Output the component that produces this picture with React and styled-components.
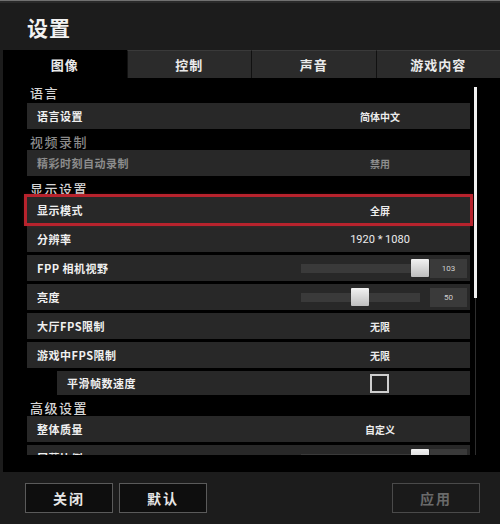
import React from "react";
import styled, { createGlobalStyle } from "styled-components";

const Global = createGlobalStyle`
  html, body {
    margin: 0;
    padding: 0;
    background: #1c1c1c;
  }
  body {
    font-family: "Noto Sans CJK SC", "Noto Sans", "Liberation Sans", sans-serif;
  }
`;

const tabs = ["图像", "控制", "声音", "游戏内容"];

const App = () => {
  return (
    <Window>
      <Global />
      <TopEdge />
      <Header>
        <Title>设置</Title>
      </Header>
      <Tabs>
        {tabs.map((t, i) => (
          <Tab key={t} active={i === 0}>
            {t}
          </Tab>
        ))}
      </Tabs>
      <Panel>
        <Scroller>
          <List>
            <Heading>语言</Heading>
            <Row>
              <Label>语言设置</Label>
              <Value>简体中文</Value>
            </Row>
            <Heading dim>视频录制</Heading>
            <Row>
              <Label dim>精彩时刻自动录制</Label>
              <Value dim>禁用</Value>
            </Row>
            <Heading>显示设置</Heading>
            <Row selected>
              <Label>显示模式</Label>
              <Value>全屏</Value>
            </Row>
            <Row>
              <Label>分辨率</Label>
              <Value plain>1920 * 1080</Value>
            </Row>
            <SliderRow label="FPP 相机视野" value="103" pos={100} />
            <SliderRow label="亮度" value="50" pos={49.5} />
            <Row>
              <Label>大厅FPS限制</Label>
              <Value>无限</Value>
            </Row>
            <Row>
              <Label>游戏中FPS限制</Label>
              <Value>无限</Value>
            </Row>
            <Row indent short>
              <Label>平滑帧数速度</Label>
              <Value>
                <Check />
              </Value>
            </Row>
            <Heading>高级设置</Heading>
            <Row>
              <Label>整体质量</Label>
              <Value>自定义</Value>
            </Row>
            <SliderRow label="屏幕比例" value="100" pos={100} />
          </List>
          <Scrollbar>
            <Thumb />
          </Scrollbar>
        </Scroller>
      </Panel>
      <Footer>
        <Button>关闭</Button>
        <Button>默认</Button>
        <Spacer />
        <Button disabled>应用</Button>
      </Footer>
    </Window>
  );
};

const SliderRow = ({ label, value, pos }) => (
  <Row>
    <Label>{label}</Label>
    <SliderWrap>
      <Track>
        <Knob style={{ left: `${pos}%` }} />
      </Track>
      <NumBox>{value}</NumBox>
    </SliderWrap>
  </Row>
);

export default App;

const Window = styled.div`
  width: 500px;
  height: 524px;
  display: flex;
  flex-direction: column;
  background: #1c1c1c;
  overflow: hidden;
`;

const TopEdge = styled.div`
  height: 3px;
  background: #2a2a2a;
  border-top: 1px solid #707070;
  box-sizing: border-box;
`;

const Header = styled.div`
  height: 47px;
  display: flex;
  align-items: center;
  padding-left: 27px;
`;

const Title = styled.div`
  color: #f2f2f2;
  font-size: 21px;
  font-weight: 700;
  letter-spacing: 1px;
`;

const Tabs = styled.div`
  height: 28px;
  display: flex;
  padding-left: 3px;
`;

const Tab = styled.div`
  flex: 1;
  display: flex;
  align-items: center;
  justify-content: center;
  background: ${(p) => (p.active ? "#000" : "#2b2b2b")};
  border-left: ${(p) => (p.active ? "none" : "1px solid #111")};
  border-top: ${(p) => (p.active ? "none" : "1px solid #3a3a3a")};
  color: #eaeaea;
  font-size: 13px;
  font-weight: 700;
  letter-spacing: 1px;
`;

const Panel = styled.div`
  margin-left: 3px;
  height: 394px;
  background: #000;
`;

const Scroller = styled.div`
  height: 377px;
  display: flex;
  overflow: hidden;
`;

const List = styled.div`
  width: 443px;
  padding: 4px 0 0 24px;
  display: flex;
  flex-direction: column;
`;

const Heading = styled.div`
  height: 18px;
  flex-shrink: 0;
  display: flex;
  align-items: center;
  padding-left: 3px;
  color: ${(p) => (p.dim ? "#8a8a8a" : "#d6d6d6")};
  font-size: 13px;
  font-weight: 500;
  letter-spacing: 1.5px;
  &:first-child {
    height: 21px;
  }
`;

const Row = styled.div`
  flex-shrink: 0;
  height: ${(p) => (p.short ? "24px" : "26px")};
  margin-bottom: 3px;
  margin-left: ${(p) => (p.indent ? "30px" : "0")};
  display: flex;
  align-items: center;
  background: #282828;
  outline: ${(p) => (p.selected ? "3px solid #b8232d" : "none")};
  box-shadow: ${(p) => (p.selected ? "0 0 4px 2px rgba(200, 40, 50, 0.35)" : "none")};
  position: relative;
  z-index: ${(p) => (p.selected ? 1 : 0)};
`;

const Label = styled.div`
  flex: 1;
  padding-left: 10px;
  color: ${(p) => (p.dim ? "#8c8c8c" : "#f0f0f0")};
  font-size: 11px;
  font-weight: 700;
  letter-spacing: 0.5px;
`;

const Value = styled.div`
  width: 180px;
  display: flex;
  justify-content: center;
  align-items: center;
  color: ${(p) => (p.dim ? "#8c8c8c" : "#ececec")};
  font-size: ${(p) => (p.plain ? "11px" : "10px")};
  font-weight: ${(p) => (p.plain ? 400 : 700)};
  font-family: ${(p) =>
    p.plain ? '"Roboto", "Liberation Sans", sans-serif' : "inherit"};
`;

const Check = styled.div`
  width: 15px;
  height: 15px;
  border: 2px solid #cfcfcf;
  background: #242424;
  margin-right: 2px;
`;

const SliderWrap = styled.div`
  width: 180px;
  display: flex;
  align-items: center;
  padding-left: 11px;
  box-sizing: border-box;
`;

const Track = styled.div`
  width: 119px;
  height: 9px;
  background: #3a3a3a;
  position: relative;
`;

const Knob = styled.div`
  position: absolute;
  top: 50%;
  width: 18px;
  height: 18px;
  transform: translate(-50%, -50%);
  background: linear-gradient(#f2f2f2, #bdbdbd);
  border-radius: 1px;
`;

const NumBox = styled.div`
  margin-left: 10px;
  width: 37px;
  height: 19px;
  background: #3a3a3a;
  color: #cfcfcf;
  font-family: "Roboto", "Liberation Sans", sans-serif;
  font-size: 8px;
  display: flex;
  align-items: center;
  justify-content: center;
`;

const Scrollbar = styled.div`
  margin: 9px 0 0 4px;
  width: 3px;
  height: 368px;
  background: linear-gradient(90deg, transparent 1px, #2e2e2e 1px, #2e2e2e 2px, transparent 2px);
`;

const Thumb = styled.div`
  width: 3px;
  height: 211px;
  background: #f0f0f0;
`;

const Footer = styled.div`
  flex: 1;
  display: flex;
  align-items: center;
  padding: 0 20px 0 25px;
  gap: 6px;
`;

const Spacer = styled.div`
  flex: 1;
`;

const Button = styled.div`
  width: 88px;
  height: 30px;
  box-sizing: border-box;
  border: 1px solid ${(p) => (p.disabled ? "#4a4a4a" : "#5a5a5a")};
  background: ${(p) => (p.disabled ? "#1a1a1a" : "#0e0e0e")};
  color: ${(p) => (p.disabled ? "#6a6a6a" : "#e6e6e6")};
  font-size: 14px;
  font-weight: 700;
  letter-spacing: 2px;
  display: flex;
  align-items: center;
  justify-content: center;
`;
